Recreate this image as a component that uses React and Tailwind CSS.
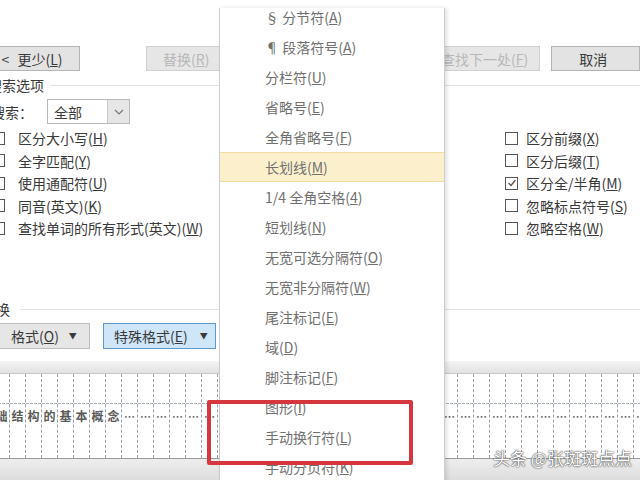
import React from "react";

const leftOptions = [
  ["区分大小写", "H"],
  ["全字匹配", "Y"],
  ["使用通配符", "U"],
  ["同音(英文)", "K"],
  ["查找单词的所有形式(英文)", "W"],
];

const rightOptions = [
  ["区分前缀", "X", false],
  ["区分后缀", "T", false],
  ["区分全/半角", "M", true],
  ["忽略标点符号", "S", false],
  ["忽略空格", "W", false],
];

const menuItems = [
  ["§ 分节符", "A"],
  ["¶ 段落符号", "A"],
  ["分栏符", "U"],
  ["省略号", "E"],
  ["全角省略号", "F"],
  ["长划线", "M"],
  ["1/4 全角空格", "4"],
  ["短划线", "N"],
  ["无宽可选分隔符", "O"],
  ["无宽非分隔符", "W"],
  ["尾注标记", "E"],
  ["域", "D"],
  ["脚注标记", "F"],
  ["图形", "I"],
  ["手动换行符", "L"],
  ["手动分页符", "K"],
];

const docChars = ["础", "结", "构", "的", "基", "本", "概", "念"];

const Box = ({ checked }) => (
  <span className="w-[13px] h-[13px] border border-[#555] bg-white flex items-center justify-center shrink-0">
    {checked && (
      <svg width="10" height="10" viewBox="0 0 10 10">
        <path d="M1.5 5 L4 7.5 L8.5 2" fill="none" stroke="#555" strokeWidth="1.3" />
      </svg>
    )}
  </span>
);

const Label = ({ text, k }) => (
  <span>
    {text}(<span className="underline">{k}</span>)
  </span>
);

export default function App() {
  return (
    <div className="relative w-[640px] h-[480px] overflow-hidden bg-white text-[14px] text-[#3a3a3a] font-['Noto_Sans_CJK_SC','Noto_Sans',sans-serif] leading-none">
      <div className="h-[46px]" />

      {/* top buttons */}
      <div className="flex h-[25px]">
        <div className="ml-[-16px] w-[98px] border border-[#b4b4b4] bg-[#e3e3e3] flex items-center justify-center gap-[8px]">
          <span>&lt;</span>
          <Label text="更少" k="L" />
        </div>
        <div className="ml-[66px] w-[100px] border border-[#d0d0d0] bg-[#e6e6e6] text-[#b8b8b8] flex items-center pl-[16px]">
          <Label text="替换" k="R" />
        </div>
        <div className="ml-[172px] w-[126px] border border-[#d0d0d0] bg-[#e6e6e6] text-[#b8b8b8] flex items-center justify-end pr-[11px]">
          <Label text="查找下一处" k="F" />
        </div>
        <div className="ml-[11px] w-[90px] border border-[#b4b4b4] bg-[#e3e3e3] flex items-center pl-[27px]">
          取消
        </div>
      </div>

      {/* search options header */}
      <div className="mt-[6px] h-[16px] flex items-center">
        <span className="ml-[-12px] shrink-0">搜索选项</span>
        <div className="flex-1 h-px bg-[#e2e2e2] ml-[6px]" />
      </div>

      <div className="mt-[6px] h-[25px] flex items-center">
        <span className="ml-[-9px] w-[56px] shrink-0">搜索：</span>
        <div className="w-[83px] h-[25px] border border-[#b9b9b9] flex">
          <span className="flex-1 flex items-center pl-[6px]">全部</span>
          <span className="w-[22px] bg-[#e6e6e6] border-l border-[#c8c8c8] flex items-center justify-center">
            <svg width="10" height="6" viewBox="0 0 10 6">
              <path d="M1 1 L5 5 L9 1" fill="none" stroke="#777" strokeWidth="1.2" />
            </svg>
          </span>
        </div>
      </div>

      {/* checkbox columns */}
      <div className="mt-[3px] h-[174px] flex">
        <div className="ml-[-8px] w-[513px] shrink-0">
          {leftOptions.map(([t, k]) => (
            <div key={t} className="h-[22.5px] flex items-center gap-[13px]">
              <Box />
              <Label text={t} k={k} />
            </div>
          ))}
        </div>
        <div>
          {rightOptions.map(([t, k, c]) => (
            <div key={t} className="h-[22.5px] flex items-center gap-[8px]">
              <Box checked={c} />
              <Label text={t} k={k} />
            </div>
          ))}
        </div>
      </div>

      {/* replace header */}
      <div className="h-[16px] flex items-center">
        <span className="ml-[-18px] shrink-0">替换</span>
        <div className="flex-1 h-px bg-[#e2e2e2] ml-[10px]" />
      </div>

      <div className="mt-[6px] h-[26px] flex">
        <div className="ml-[-5px] w-[95px] border border-[#bdbdbd] bg-[#e6e6e6] flex items-center pl-[15px] gap-[10px]">
          <Label text="格式" k="O" />
          <span className="text-[8px]">▼</span>
        </div>
        <div className="ml-[13px] w-[113px] border border-[#5b9bd5] bg-[#cfe5f8] flex items-center pl-[10px] gap-[12px]">
          <Label text="特殊格式" k="E" />
          <span className="text-[8px]">▼</span>
        </div>
      </div>

      {/* document behind */}
      <div className="mt-[12px]">
        <div className="h-[13px] bg-gradient-to-b from-[#f4f4f4] to-[#e2e2e2] border-b border-[#c9c9c9]" />
        <div className="h-[85px] flex ml-[-6px] border-b border-[#9a9a9a] bg-white">
          {Array.from({ length: 42 }).map((_, i) => (
            <div key={i} className="w-[16px] shrink-0 h-full border-r border-dashed border-[#97a1ad] flex flex-col overflow-hidden">
              <div className="h-[30px] shrink-0 border-b border-dashed border-[#a8b0ba]" />
              <div className="h-[24px] shrink-0 flex items-center justify-center text-[12px] font-bold text-[#5a5a5a]">
                {i < docChars.length ? docChars[i] : <span className="text-[11px] font-bold text-[#666]">…</span>}
              </div>
            </div>
          ))}
        </div>
        <div className="h-[22px] bg-gradient-to-b from-[#eeeeee] to-[#dcdcdc]" />
      </div>

      {/* special format menu */}
      <div className="absolute left-[219px] top-[8px] w-[226px] h-[480px] bg-white border-x border-[#cdcdcd] shadow-[2px_0_4px_rgba(0,0,0,0.12)] overflow-hidden text-[#707070]">
        <div className="mt-[-6px]">
          {menuItems.map(([t, k], i) => (
            <div
              key={i}
              className={
                i === 5
                  ? "h-[30px] flex items-center pl-[45px] bg-[#fcf0cc] border-y border-[#f0dba0]"
                  : "h-[30px] flex items-center pl-[45px]"
              }
            >
              <Label text={t} k={k} />
            </div>
          ))}
        </div>
      </div>

      {/* red highlight box */}
      <div className="absolute left-[207px] top-[400px] w-[206px] h-[65px] border-[4px] border-[#d6373e] rounded-[2px]" />

      {/* watermark */}
      <div className="absolute left-[493px] top-[449px] text-[17px] text-white [text-shadow:0_0_1px_#333,0_0_2px_#444]">
        头条 @张斑斑点点
      </div>
    </div>
  );
}
